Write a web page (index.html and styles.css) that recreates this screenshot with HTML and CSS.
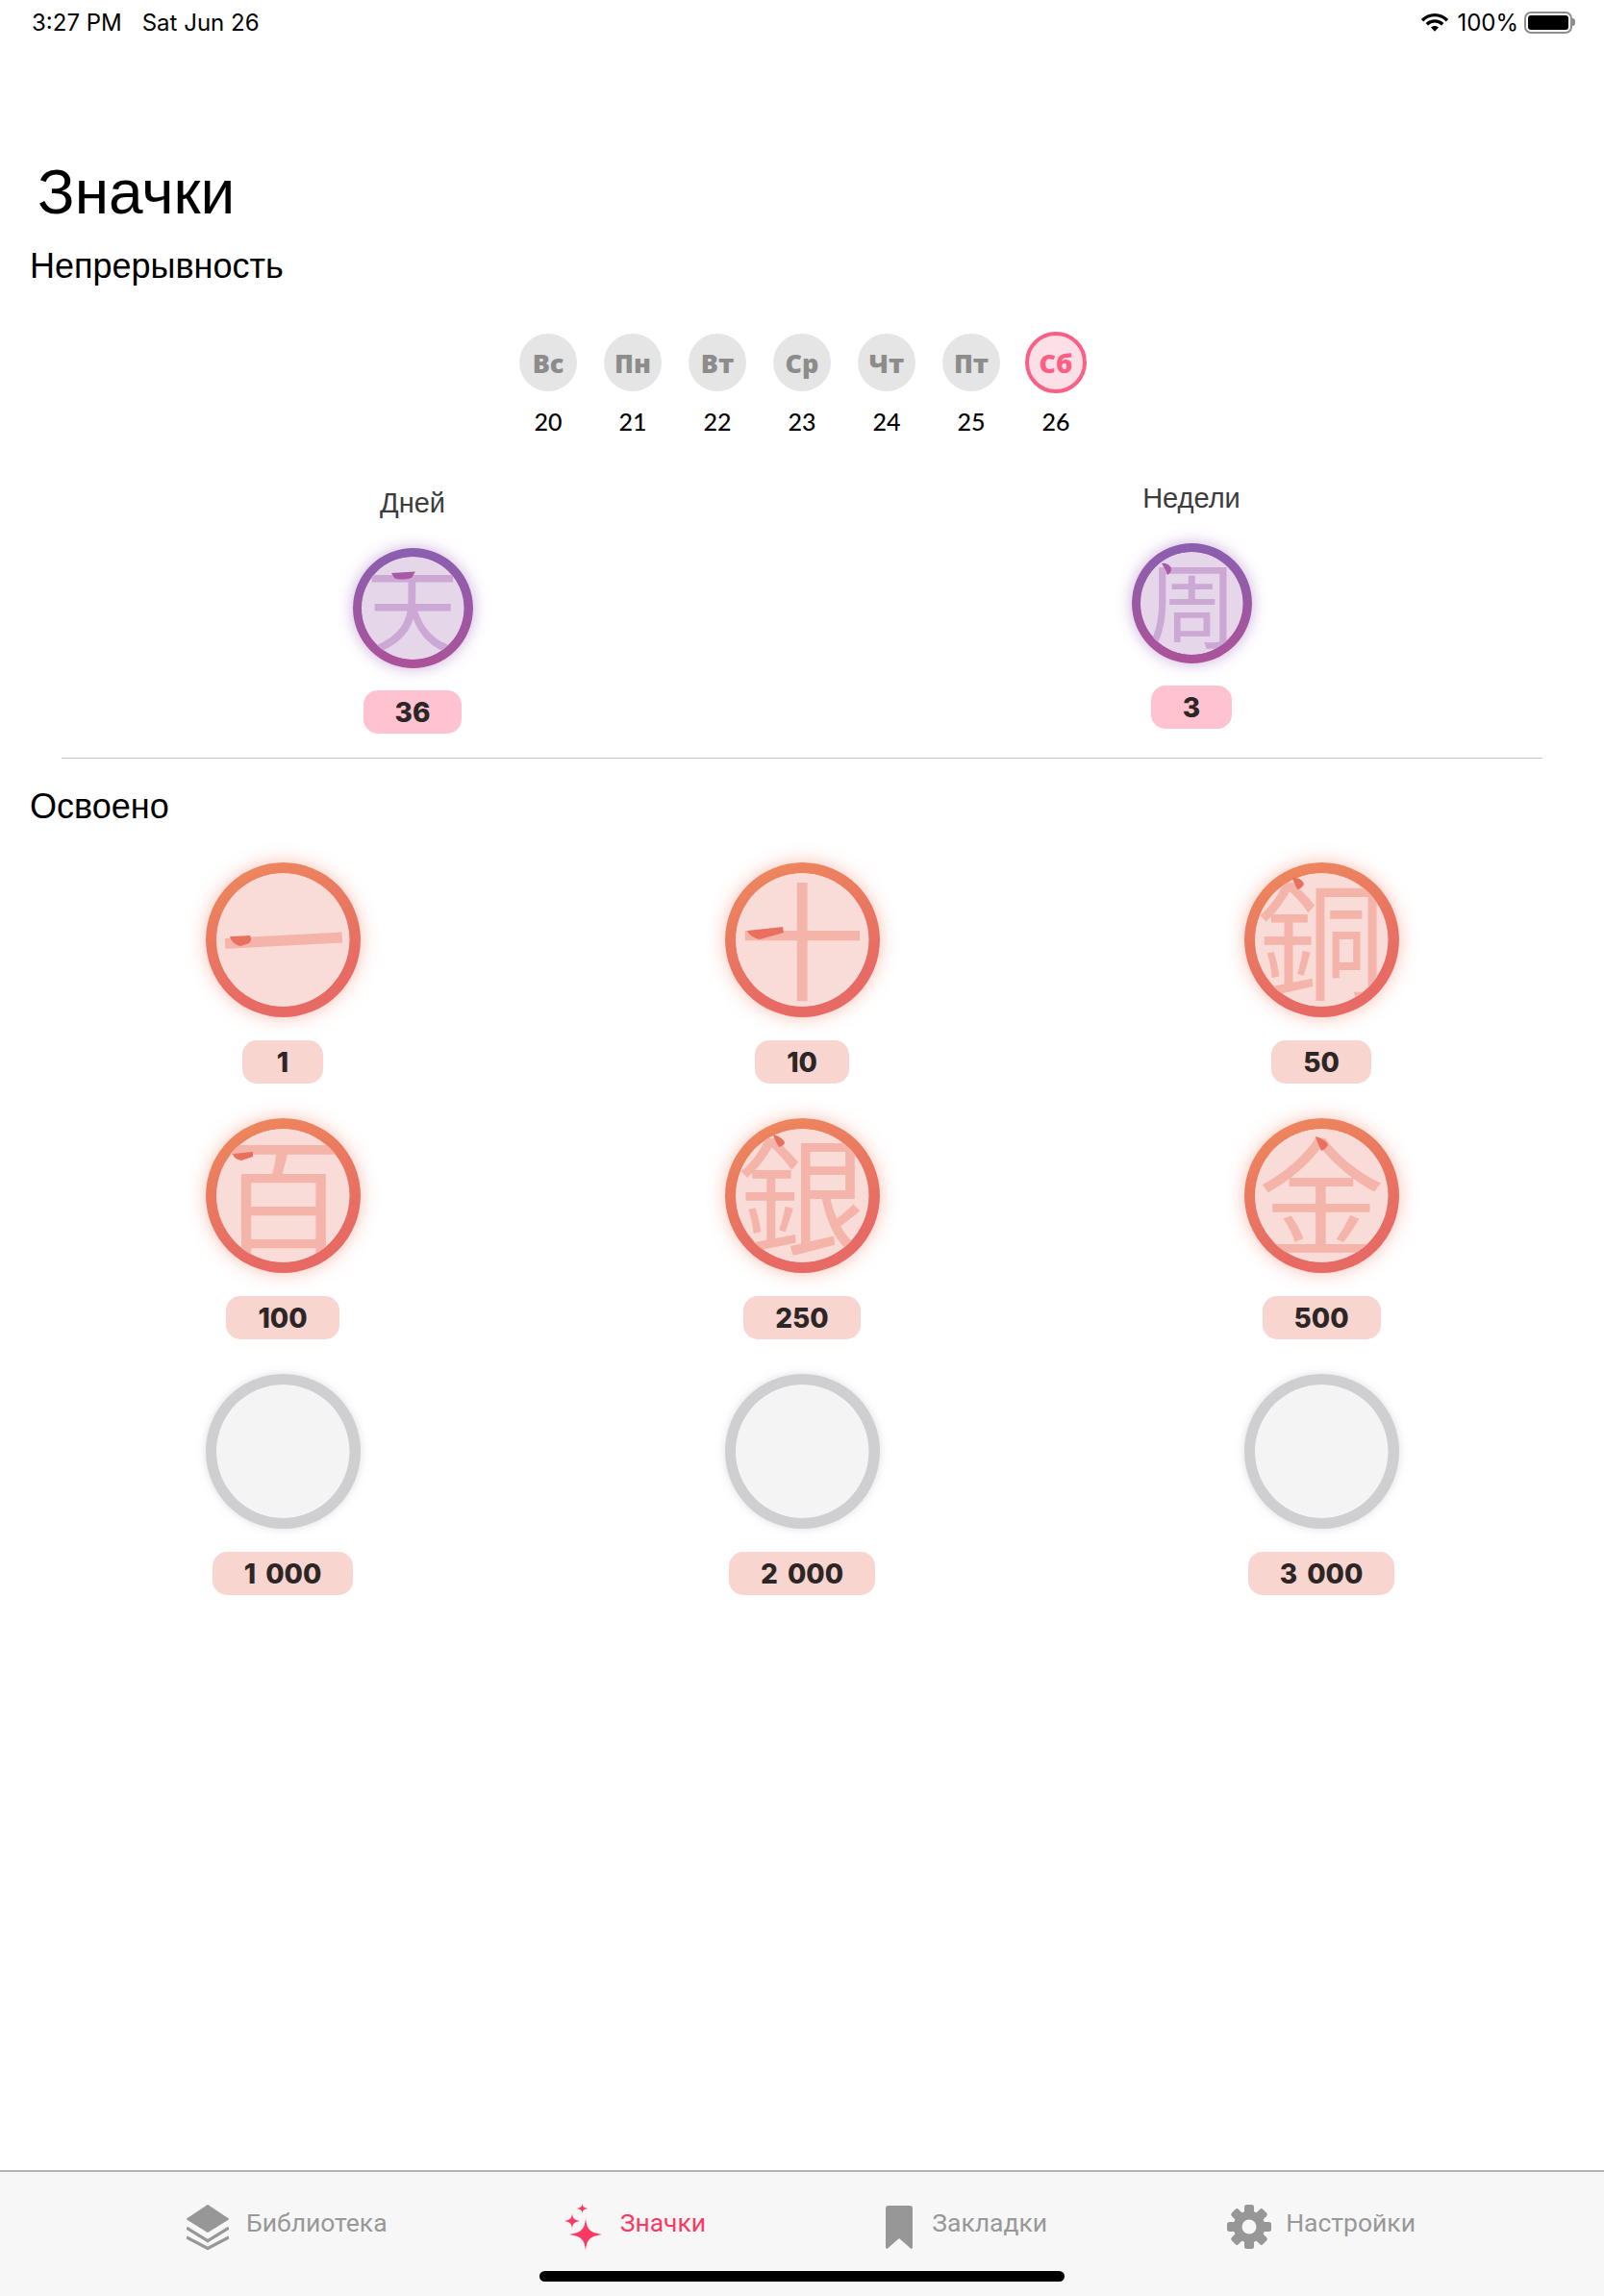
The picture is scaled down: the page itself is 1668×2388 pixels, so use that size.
FILE: index.html
```html
<!DOCTYPE html>
<html lang="ru">
<head>
<meta charset="utf-8">
<title>Значки</title>
<link rel="stylesheet" href="styles.css">
</head>
<body>
<div class="app">
  <header class="status">
    <div class="status-left"><span>3:27 PM</span><span>Sat Jun 26</span></div>
    <div class="status-right">
      <svg class="wifi" viewBox="0 0 30 20"><path d="M2 8.200C9.500 .8 20.500 .8 28 8.200M6.800 12.200C11.600 7.800 18.400 7.800 23.200 12.200" fill="none" stroke="#000" stroke-width="3.400"/><path d="M11 15.600C13.400 13.600 16.600 13.600 19 15.600L15 19.800Z" fill="#000"/></svg>
      <span>100%</span>
      <div class="battery"><div class="battery-fill"></div></div>
      <div class="battery-tip"></div>
    </div>
  </header>

  <main class="main">
    <h1 class="title">Значки</h1>
    <h2 class="heading">Непрерывность</h2>

    <div class="week">
      <div class="day"><div class="day-dot">Вс</div><div class="day-num">20</div></div>
      <div class="day"><div class="day-dot">Пн</div><div class="day-num">21</div></div>
      <div class="day"><div class="day-dot">Вт</div><div class="day-num">22</div></div>
      <div class="day"><div class="day-dot">Ср</div><div class="day-num">23</div></div>
      <div class="day"><div class="day-dot">Чт</div><div class="day-num">24</div></div>
      <div class="day"><div class="day-dot">Пт</div><div class="day-num">25</div></div>
      <div class="day"><div class="day-dot day-dot-today">Сб</div><div class="day-num">26</div></div>
    </div>

    <section class="streaks">
      <div class="streak streak-days">
        <div class="streak-label">Дней</div>
        <div class="medal medal-small medal-purple">
          <div class="disc"><span class="glyph">天</span></div>
          <svg class="accent" viewBox="0 0 125 125"><path d="M40 26L65 24.500L61 31C54 33 46 33 43 31Z" fill="#a95aa6"/></svg>
        </div>
        <div class="pill pill-pink">36</div>
      </div>
      <div class="streak">
        <div class="streak-label">Недели</div>
        <div class="medal medal-small medal-purple">
          <div class="disc"><span class="glyph">周</span></div>
          <svg class="accent" viewBox="0 0 125 125"><path d="M31 21C35 20 41 23 41 27C41 30 39 32 37 33C36 28 33 25 31 21Z" fill="#a95aa6"/></svg>
        </div>
        <div class="pill pill-pink">3</div>
      </div>
    </section>

    <hr class="divider">
    <h2 class="heading heading-mastered">Освоено</h2>

    <section class="medals">
      <div class="item">
        <div class="medal medal-orange"><div class="disc"><span class="glyph glyph-tilt">一</span></div>
          <svg class="accent" viewBox="0 0 161 161"><path d="M25 77L46 76C48 79 47 82 45 84L36 87C31 86 26 82 25 77Z" fill="#e9705f"/></svg></div>
        <div class="pill">1</div>
      </div>
      <div class="item">
        <div class="medal medal-orange"><div class="disc"><span class="glyph">十</span></div>
          <svg class="accent" viewBox="0 0 161 161"><path d="M23 71L60 67L61 73L36 80C31 79 25 76 23 71Z" fill="#e9705f"/></svg></div>
        <div class="pill">10</div>
      </div>
      <div class="item">
        <div class="medal medal-orange"><div class="disc"><span class="glyph">銅</span></div>
          <svg class="accent" viewBox="0 0 161 161"><path d="M50 16C55 15 61 18 62 23C60 26 57 28 55 28C53 24 51 20 50 16Z" fill="#e9705f"/></svg></div>
        <div class="pill">50</div>
      </div>
      <div class="item">
        <div class="medal medal-orange"><div class="disc"><span class="glyph">百</span></div>
          <svg class="accent" viewBox="0 0 161 161"><path d="M28 37L49 35L49 40L37 44C32 43 29 41 28 37Z" fill="#e9705f"/></svg></div>
        <div class="pill">100</div>
      </div>
      <div class="item">
        <div class="medal medal-orange"><div class="disc"><span class="glyph">銀</span></div>
          <svg class="accent" viewBox="0 0 161 161"><path d="M50 17C55 18 62 22 62 26C61 28 59 29 56 30C54 26 51 22 50 17Z" fill="#e9705f"/></svg></div>
        <div class="pill">250</div>
      </div>
      <div class="item">
        <div class="medal medal-orange"><div class="disc"><span class="glyph">金</span></div>
          <svg class="accent" viewBox="0 0 161 161"><path d="M74 19C79 20 86 24 87 28C85 31 83 33 80 34C78 29 75 24 74 19Z" fill="#e9705f"/></svg></div>
        <div class="pill">500</div>
      </div>
      <div class="item">
        <div class="medal medal-gray"><div class="disc"></div></div>
        <div class="pill">1 000</div>
      </div>
      <div class="item">
        <div class="medal medal-gray"><div class="disc"></div></div>
        <div class="pill">2 000</div>
      </div>
      <div class="item">
        <div class="medal medal-gray"><div class="disc"></div></div>
        <div class="pill">3 000</div>
      </div>
    </section>
  </main>

  <nav class="tabbar">
    <div class="tab">
      <svg class="icon icon-library" viewBox="0 0 44 47">
        <path d="M22 1L43 15L22 28L1 15Z" fill="#979797" stroke="#979797" stroke-width="2" stroke-linejoin="round"/>
        <path d="M0 24L22 37.500L44 24M0 34L22 45.500L44 34" fill="none" stroke="#979797" stroke-width="3.200"/>
      </svg>
      <span class="tab-label">Библиотека</span>
    </div>
    <div class="tab tab-active">
      <svg class="icon icon-sparkle" viewBox="0 0 40 49">
        <path d="M22 15C23 25 25 30 39 32C25 34 23 39 22 49C21 39 19 34 5 32C19 30 21 25 22 15Z" fill="#fb3a64"/>
        <path d="M8 10C8.500 15 10 17 16 18C10 19 8.500 21 8 26C7.500 21 6 19 0 18C6 17 7.500 15 8 10Z" fill="#fb3a64"/>
        <path d="M18.500 0C19 3 20 4 24 5C20 6 19 7 18.500 10C18 7 17 6 13 5C17 4 18 3 18.500 0Z" fill="#fb3a64"/>
      </svg>
      <span class="tab-label">Значки</span>
    </div>
    <div class="tab">
      <svg class="icon icon-bookmark" viewBox="0 0 28 45"><path d="M3 0H25A3 3 0 0 1 28 3V44L26.500 45L14 34L1.500 45L0 44V3A3 3 0 0 1 3 0Z" fill="#979797"/></svg>
      <span class="tab-label">Закладки</span>
    </div>
    <div class="tab">
      <svg class="icon icon-gear" viewBox="0 0 46 46">
        <g fill="#979797">
          <circle cx="23" cy="23" r="16.500"/>
          <rect x="18" y="0" width="10" height="46" rx="2.500"/>
          <rect x="0" y="18" width="46" height="10" rx="2.500"/>
          <rect x="18" y="0" width="10" height="46" rx="2.500" transform="rotate(45 23 23)"/>
          <rect x="18" y="0" width="10" height="46" rx="2.500" transform="rotate(-45 23 23)"/>
        </g>
        <circle cx="23" cy="23" r="7.500" fill="#f7f7f7"/>
      </svg>
      <span class="tab-label">Настройки</span>
    </div>
    <div class="home"></div>
  </nav>
</div>
</body>
</html>
```
FILE: styles.css
```css
* { box-sizing: border-box; }
html, body { margin: 0; padding: 0; background: #fff; }
body { font-family: "Liberation Sans", Arial, sans-serif; color: #000; }
.app { width: 1668px; height: 2388px; display: flex; flex-direction: column; overflow: hidden; }

.status { height: 46px; padding: 0 30px 0 33px; display: flex; justify-content: space-between; align-items: center; font: 400 24px Inter, sans-serif; }
.status-left { display: flex; gap: 21px; }
.status-right { display: flex; align-items: center; }
.wifi { width: 30px; height: 20px; margin-right: 8px; }
.battery { width: 50px; height: 23px; margin-left: 6px; border: 2px solid #8d8d8d; border-radius: 7px; padding: 2px; }
.battery-fill { width: 100%; height: 100%; background: #000; border-radius: 3px; }
.battery-tip { width: 3px; height: 8px; background: #8d8d8d; border-radius: 0 3px 3px 0; }

.main { flex: 1; display: flex; flex-direction: column; }
.title { margin: 119px 0 0; padding-left: 39px; font-size: 64px; line-height: 70px; font-weight: 400; }
.heading { margin: 22px 0 0; padding-left: 31px; font-size: 36px; line-height: 40px; font-weight: 400; }
.heading-mastered { margin-top: 30px; }

.week { margin-top: 48px; display: grid; grid-template-columns: repeat(7, 88px); justify-content: center; }
.day { display: flex; flex-direction: column; align-items: center; }
.day-dot { margin: 2px 0; width: 60px; height: 60px; border-radius: 50%; background: #e5e5e5; color: #8c8c8c; display: flex; align-items: center; justify-content: center; font: 800 27px "Open Sans", sans-serif; }
.day-dot-today { margin: 0; width: 64px; height: 64px; background: #fde0e7; color: #fb5f85; border: 4px solid #fb5f85; }
.day-num { margin-top: 14px; font: 500 25px/30px Lato, sans-serif; }

.streaks { margin: 48px 24px 0; display: grid; grid-template-columns: 1fr 1fr; align-items: start; }
.streak { display: flex; flex-direction: column; align-items: center; }
.streak-days { padding-top: 5px; }
.streak-label { font-size: 29px; line-height: 34px; color: #3c3c3c; margin-bottom: 30px; }

.medal { position: relative; width: 161px; height: 161px; padding: 11px; border-radius: 50%; }
.medal-small { width: 125px; height: 125px; padding: 9px; }
.disc { width: 100%; height: 100%; border-radius: 50%; clip-path: circle(50%); display: flex; align-items: center; justify-content: center; }
.glyph { font: 400 133px/1 "Noto Sans CJK JP", sans-serif; color: #f5b4a9; margin-bottom: 10px; }
.glyph-tilt { transform: rotate(-3deg); }
.medal-small .glyph { font-size: 96px; color: #cba9d4; margin-bottom: 6px; }
.accent { position: absolute; inset: 0; width: 100%; height: 100%; }

.medal-orange { background: linear-gradient(160deg, #ee8a5c, #e76a64 75%); box-shadow: 0 0 18px rgba(243, 125, 100, .5); }
.medal-orange .disc { background: radial-gradient(circle, #f9dcd8 78%, #f3c6bf 100%); }
.medal-purple { background: linear-gradient(180deg, #8a5fb0, #ac5299); box-shadow: 0 0 16px rgba(140, 80, 175, .45); }
.medal-purple .disc { background: radial-gradient(circle, #e6d6ea 78%, #d6bfdf 100%); }
.medal-gray { background: #cfcfd1; box-shadow: 0 0 8px rgba(190, 190, 190, .5); }
.medal-gray .disc { background: radial-gradient(circle, #f4f4f4 80%, #e6e6e6 100%); }

.pill { margin-top: 24px; min-width: 84px; height: 45px; padding: 0 33px; border-radius: 15px; background: #f9d5d0; color: #2d2626; display: flex; align-items: center; justify-content: center; font: 800 28px/1 Inter, sans-serif; word-spacing: 4px; white-space: pre; }
.pill-pink { margin-top: 23px; background: #fec2d0; }

.divider { width: 1540px; margin: 25px 0 0 64px; border: 0; height: 1px; background: #c4c4c4; }

.medals { margin: 38px 24px 0; display: grid; grid-template-columns: repeat(3, 540px); row-gap: 36px; }
.item { display: flex; flex-direction: column; align-items: center; }

.tabbar { position: relative; height: 131px; padding: 33px 196px 0 194px; border-top: 2px solid #b4b4b4; background: #f7f7f7; display: flex; justify-content: space-between; align-items: flex-start; }
.tab { display: flex; align-items: center; gap: 18px; height: 48px; font: 400 26.5px Roboto, sans-serif; color: #989898; }
.tab-label { margin-bottom: 9px; }
.tab-active { color: #fb3a64; margin-left: -3px; }
.icon { display: block; height: 47px; }
.icon-library { width: 44px; }
.icon-sparkle { width: 40px; height: 49px; }
.icon-bookmark { width: 28px; height: 45px; margin-right: 2px; }
.icon-gear { width: 46px; height: 46px; margin-right: -3px; }
.home { position: absolute; left: 561px; bottom: 15px; width: 546px; height: 11px; border-radius: 6px; background: #000; }
```
